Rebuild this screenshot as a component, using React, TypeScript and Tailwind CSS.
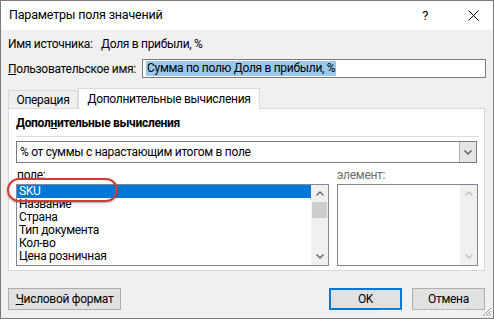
import React from "react";

const font = { fontFamily: 'Roboto, "Noto Sans", sans-serif' };

function Up({ c = "#606060" }: { c?: string }) {
  return (
    <svg width="8" height="5" viewBox="0 0 8 5">
      <path d="M0.5 4.5 L4 1 L7.5 4.5" fill="none" stroke={c} strokeWidth="1.3" />
    </svg>
  );
}
function Down({ c = "#606060" }: { c?: string }) {
  return (
    <svg width="8" height="5" viewBox="0 0 8 5">
      <path d="M0.5 0.5 L4 4 L7.5 0.5" fill="none" stroke={c} strokeWidth="1.3" />
    </svg>
  );
}

export default function App() {
  const items = ["Название", "Страна", "Тип документа", "Кол-во", "Цена розничная"];
  return (
    <div
      className="relative w-[494px] h-[319px] bg-[#f0f0f0] border border-[#7a7a7a] text-[12px] tracking-[-0.3px] text-black overflow-hidden whitespace-nowrap"
      style={font}
    >
      {/* title bar */}
      <div className="h-[29px] bg-white flex items-center justify-between pl-[8px] pr-[14px]">
        <span className="text-[12.5px] tracking-[-0.2px]">Параметры поля значений</span>
        <div className="flex items-center gap-[40px]">
          <span className="text-[13px]">?</span>
          <svg width="11" height="11" viewBox="0 0 11 11">
            <path d="M0.5 0.5 L10.5 10.5 M10.5 0.5 L0.5 10.5" stroke="#000" strokeWidth="1" />
          </svg>
        </div>
      </div>

      <div className="px-[7px]">
        <div className="h-[16px] mt-[6px] flex items-center">
          <span className="w-[93px] flex-none">Имя источника:</span>
          <span>Доля в прибыли, %</span>
        </div>
        <div className="h-[19px] mt-[7px] flex items-center">
          <span className="w-[134px] flex-none">
            <span className="underline">П</span>ользовательское имя:
          </span>
          <div className="flex-1 h-[19px] border border-[#7a7a7a] bg-white flex items-center pl-[3px]">
            <span className="bg-[#99c9ef] leading-[15px] px-[1px]">Сумма по полю Доля в прибыли, %</span>
          </div>
        </div>

        {/* tabs */}
        <div className="mt-[9px] flex items-end h-[21px] pr-[2px]">
          <div className="h-[18px] w-[70px] border border-b-0 border-[#d9d9d9] bg-[#f0f0f0] flex items-center justify-center">
            Операция
          </div>
          <div className="h-[21px] w-[182px] border border-b-0 border-[#d9d9d9] bg-white flex items-center justify-center -mb-[1px] relative z-10">
            Дополнительные вычисления
          </div>
        </div>
        <div className="h-[163px] mr-[1px] border border-[#d9d9d9] bg-white px-[7px]">
          <div className="h-[24px] flex items-end font-bold text-[12px] pb-[1px]">
            Допол<span className="underline">н</span>ительные вычисления
          </div>
          <div className="mt-[3px] h-[1px] bg-[#dcdcdc] mr-[-2px]" />
          <div className="mt-[4px] h-[22px] border border-[#7a7a7a] bg-white flex items-center">
            <span className="flex-1 pl-[3px]">% от суммы с нарастающим итогом в поле</span>
            <div className="w-[17px] h-full bg-[#e5e5e5] border-l border-[#adadad] flex items-center justify-center">
              <Down c="#555" />
            </div>
          </div>
          <div className="mt-[3px] flex gap-[8px]">
            <div className="w-[313px]">
              <div className="h-[18px] flex items-center pl-[1px]">поле:</div>
              <div className="h-[82px] border border-[#828790] bg-white flex">
                <div className="flex-1 flex flex-col">
                  <div className="h-[13px] leading-[13px] bg-[#0078d7] text-white pl-[2px]">SKU</div>
                  {items.map((t) => (
                    <div key={t} className="h-[13px] leading-[13px] pl-[2px]">
                      {t}
                    </div>
                  ))}
                </div>
                <div className="w-[17px] bg-[#f0f0f0] flex flex-col items-center">
                  <div className="h-[17px] flex items-center justify-center">
                    <Up />
                  </div>
                  <div className="w-[15px] h-[16px] bg-[#cdcdcd]" />
                  <div className="flex-1" />
                  <div className="h-[17px] flex items-center justify-center">
                    <Down />
                  </div>
                </div>
              </div>
            </div>
            <div className="flex-1 mr-[-1px]">
              <div className="h-[18px] flex items-center text-[#6d6d6d]">элемент:</div>
              <div className="h-[82px] border border-[#828790] bg-white flex">
                <div className="flex-1" />
                <div className="w-[17px] bg-[#f0f0f0] flex flex-col items-center">
                  <div className="h-[17px] flex items-center justify-center">
                    <Up c="#c0c0c0" />
                  </div>
                  <div className="flex-1" />
                  <div className="h-[17px] flex items-center justify-center">
                    <Down c="#c0c0c0" />
                  </div>
                </div>
              </div>
            </div>
          </div>
        </div>

        {/* buttons */}
        <div className="mt-[17px] flex items-center">
          <div className="w-[113px] h-[22px] bg-[#e1e1e1] border border-[#adadad] flex items-center justify-center">
            <span>
              <span className="underline">Ч</span>исловой формат
            </span>
          </div>
          <div className="flex-1" />
          <div className="w-[73px] h-[22px] bg-[#e1e1e1] border-2 border-[#0078d7] flex items-center justify-center">
            OK
          </div>
          <div className="w-[73px] h-[22px] ml-[10px] mr-[1px] bg-[#e1e1e1] border border-[#adadad] flex items-center justify-center">
            Отмена
          </div>
        </div>
      </div>

      {/* red annotation ellipse */}
      <div className="absolute left-[6px] top-[177px] w-[111px] h-[24px] border-2 border-[#d23c36] rounded-[12px] shadow-[0_1px_2px_rgba(0,0,0,0.35)]" />

      {/* watermark */}
      <div className="absolute left-[378px] top-[304px] text-[11px] leading-[13px] text-white/35 tracking-[0.3px]">
        www.excel-office.ru
      </div>

      {/* resize grip */}
      <svg className="absolute right-[1px] bottom-[1px]" width="10" height="10" viewBox="0 0 10 10">
        <path d="M9 1 L1 9 M9 4 L4 9 M9 7 L7 9" stroke="#a0a0a0" strokeWidth="1" />
      </svg>
    </div>
  );
}
